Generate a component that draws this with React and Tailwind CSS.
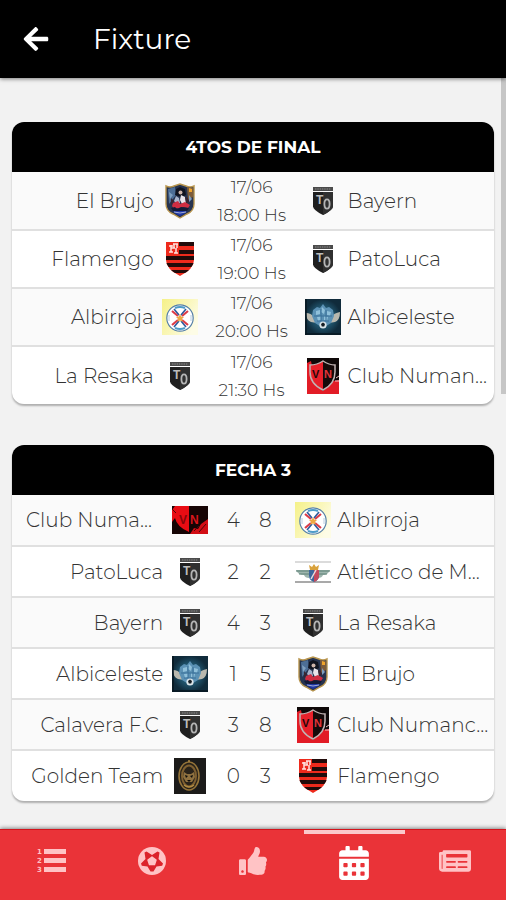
import { FaArrowLeft, FaCalendarAlt, FaNewspaper, FaThumbsUp } from "react-icons/fa";

function ShieldTO() {
  return (
    <svg viewBox="0 0 20 28" className="mx-auto h-7 w-5" role="img" aria-label="TO">
      <path d="M0 0h20v4H0z" fill="#4b4b4b" />
      <path d="M2 2h16" stroke="#8a8a8a" strokeWidth="1" strokeDasharray="1.5 .8" />
      <path d="M0 5h20v14.500q0 3.500-10 8.500Q0 23 0 19.500z" fill="#1f1f1f" />
      <path d="M10 5h10v14.500q0 3.500-10 8.500z" fill="#303030" />
      <text x="3" y="17" fontSize="12" fontWeight="700" fill="#bdbdbd" fontFamily="Liberation Sans, sans-serif">T</text>
      <ellipse cx="14" cy="17" rx="2.600" ry="4.600" fill="none" stroke="#b5b5b5" strokeWidth="1.800" />
    </svg>
  );
}

function Brujo() {
  return (
    <svg viewBox="0 0 30 36" className="mx-auto h-9 w-[30px]">
      <path d="M1 3q4 2 8 0l6-2 6 2q4 2 8 0v18q0 7-7 10l-7 4-7-4q-7-3-7-10z" fill="#26334f" stroke="#b8954e" strokeWidth="1.400" />
      <path d="M3 6l7-2 1 8-7 9z" fill="#4d6e96" />
      <path d="M22 4l6 1v9l-5 3z" fill="#7d5c3a" />
      <path d="M24 5l3 1v3h-3z" fill="#f0a52c" />
      <path d="M11 6l4-2 5 2 1 6-4 2-7-2z" fill="#10131f" />
      <circle cx="15.500" cy="9.500" r="2" fill="#cdb4aa" />
      <path d="M11 13l3 2 1 5-3 1-3-3z" fill="#a9b4cc" />
      <path d="M16 12l4 2 1 6-4 1-2-4z" fill="#e9e4ea" />
      <path d="M8 20l5-2 2 3 5-2 5 3-2 3-5-1-3 2-3-1-3 1-2-3z" fill="#cf2d42" />
      <path d="M20 14l3 1 1 4-3 1zM6 15l3 3-3 4z" fill="#3a2531" />
      <path d="M6 25l4-1 2 2 4-2 8 1-2 3H8z" fill="#131a36" />
      <path d="M8 28h14l-3 3-4 2-4-2z" fill="#1f36a3" />
      <path d="M9 29q6 2 12 0" stroke="#c3cbe6" strokeWidth=".8" fill="none" />
      <path d="M4 9l4 3-3 4zM24 12l3 4-3 3z" fill="#7f9fc0" />
    </svg>
  );
}

function Flamengo() {
  return (
    <svg viewBox="0 0 28 34" className="mx-auto h-[34px] w-7">
      <defs>
        <clipPath id="fla">
          <path d="M0 0h28v18q0 9-14 16Q0 27 0 18z" />
        </clipPath>
      </defs>
      <g clipPath="url(#fla)">
        <path d="M0 0h28v34H0z" fill="#ee2a1c" />
        <path d="M13 0h15v4H13zM13 8h15v4H13zM0 14h28v4H0zM0 21h28v4H0zM0 28h28v3H0z" fill="#210b0a" />
        <path d="M0 0h13v13H0z" fill="#ee2a1c" />
        <path d="M3 4h4M5 3v7M3 10h4M5 6h4M7 2h5M8 2v4M10 6v5M8 11h4M11 2v4" stroke="#ffe3df" strokeWidth="1.500" fill="none" />
      </g>
    </svg>
  );
}

function Albirroja() {
  return (
    <svg viewBox="0 0 36 36" className="mx-auto size-9">
      <defs>
        <linearGradient id="sun" x1="0" y1="0" x2="1" y2=".6">
          <stop offset="0" stopColor="#f5f188" />
          <stop offset=".6" stopColor="#faf7bd" />
          <stop offset="1" stopColor="#fdfce6" />
        </linearGradient>
      </defs>
      <path d="M0 0h36v36H0z" fill="url(#sun)" />
      <circle cx="18" cy="19" r="13.200" fill="#fff" stroke="#5681a8" strokeWidth="1.200" />
      <path d="M10 12l6 5M26 12l-6 5M10 26l6-5M26 26l-6-5" stroke="#dd3d48" strokeWidth="2.200" />
      <path d="M12 10l5 6M24 10l-5 6M12 28l5-6M24 28l-5-6" stroke="#2e5b9d" strokeWidth="1.600" />
      <path d="M13 9q5-2 10 0M13 29q5 2 10 0" stroke="#4d9bc8" strokeWidth="2" fill="none" />
      <path d="M7 16v6M29 16v6" stroke="#b9cfe0" strokeWidth="1" />
      <path d="M18 15l1.200 2.600 2.800.4-2 2 .5 2.800-2.500-1.300-2.500 1.300.5-2.800-2-2 2.800-.4z" fill="#eda944" />
    </svg>
  );
}

function Albiceleste() {
  return (
    <svg viewBox="0 0 36 36" className="mx-auto size-9">
      <defs>
        <radialGradient id="sky">
          <stop offset="0" stopColor="#2d6f8c" />
          <stop offset=".6" stopColor="#1e5068" />
          <stop offset="1" stopColor="#102b3b" />
        </radialGradient>
      </defs>
      <path d="M0 0h36v36H0z" fill="url(#sky)" />
      <path d="M1 14q5 0 8 4l3 6-6-1q-5-2-5-9zM35 13q-6 1-9 5l-2 6 6-1q5-2 5-10z" fill="#b9b8ae" />
      <path d="M8 11l4-3 3 1 3-4 3 4 3-1 4 3 1 6-3 7-8 5-8-5-3-7z" fill="#5b91b4" />
      <path d="M11 12l4-1v4l-4 1zM17 8l3 3-1 4-3-2zM22 12l4 1-1 4-3-1zM12 18l4-1v4l-3 1zM19 17l4 1-1 4-3-1z" fill="#8fc0da" />
      <path d="M9 17h18M12 22h12M16 10v12M21 11v11" stroke="#3a7199" strokeWidth="1" fill="none" />
      <circle cx="18" cy="26" r="3.600" fill="#dce6ea" />
      <path d="M16 25l2-1.500 2 1.500-.8 2.500h-2.400z" fill="#141c22" />
      <path d="M0 35h36M1 0v36" stroke="#071720" strokeWidth="1.500" />
    </svg>
  );
}

function Numancia() {
  return (
    <svg viewBox="0 0 32 36" className="mx-auto h-9 w-8">
      <path d="M0 0h32v36H0z" fill="#0e0808" />
      <path d="M0 5l4-2 4 21 8 9 10-10 6-1v14H0z" fill="#e21c26" />
      <path d="M3 7q7 0 13-4v29Q4 27 3 14z" fill="#e8202a" />
      <path d="M16 3q6 4 12 4v8q-1 12-12 17z" fill="#150a0a" />
      <path d="M3 7q7 0 13-4 6 4 12 4v7q0 12-12 18Q3 26 3 14z" fill="none" stroke="#c1b4b4" strokeWidth="1.500" />
      <path d="M29 20l3-2M28 23l4 0" stroke="#f0c5c5" strokeWidth="1" />
      <text x="5" y="20" fontSize="11" fontWeight="700" fill="#250707" fontFamily="Liberation Sans, sans-serif">V</text>
      <text x="17" y="20" fontSize="11" fontWeight="700" fill="#e33338" fontFamily="Liberation Sans, sans-serif">N</text>
    </svg>
  );
}

function NumanciaFlag() {
  return (
    <svg viewBox="0 0 36 28" className="mx-auto h-7 w-9">
      <path d="M0 0h36v28H0z" fill="#160404" />
      <path d="M3 0h14v26Q5 21 3 12L0 16V4z" fill="#e80c13" />
      <path d="M18 28l4-6 4 1 3-5 7-5v15z" fill="#d20d14" />
      <path d="M22 25l5-5M27 26l7-8M0 3l4 4" stroke="#4c0507" strokeWidth="1" />
      <text x="7" y="18" fontSize="12" fontWeight="700" fill="#860509" fontFamily="Liberation Sans, sans-serif">V</text>
      <text x="18" y="18" fontSize="12" fontWeight="700" fill="#d9151b" fontFamily="Liberation Sans, sans-serif">N</text>
    </svg>
  );
}

function Atletico() {
  return (
    <svg viewBox="0 0 36 22" className="mx-auto h-[22px] w-9">
      <path d="M0 1h36" stroke="#cfcfcf" strokeWidth="1.400" />
      <path d="M0 21h36" stroke="#8c8c8c" strokeWidth="1.400" />
      <path d="M1 9h13v8q-4 0-5-3-6 0-8-5zM35 9H23v8q4 0 5-3 5 0 7-5z" fill="#9db5ad" />
      <path d="M1 10h13M4 13h10M35 10H23M32 13h-9" stroke="#5c8077" strokeWidth="1" />
      <path d="M14 9h10v6q0 4-5 6-5-2-5-6z" fill="#3d679b" />
      <path d="M19 9h5v6q0 4-5 6z" fill="#c34a5d" />
      <path d="M16 18l5-9" stroke="#e7dede" strokeWidth="1.500" />
      <path d="M14 4l3 2 2-3 2 3 3-2-1 5h-8z" fill="#d9a23c" />
    </svg>
  );
}

function GoldenTeam() {
  return (
    <svg viewBox="0 0 32 36" className="mx-auto h-9 w-8">
      <path d="M0 0h32v36H0z" fill="#1c1b1a" />
      <ellipse cx="15" cy="18" rx="10" ry="14" fill="#2a231a" stroke="#957439" strokeWidth="1.600" />
      <ellipse cx="15" cy="18" rx="7" ry="10.500" fill="none" stroke="#7f6031" strokeWidth="2" />
      <path d="M10 14l3 2h4l3-2 1 5-3 5h-6l-3-5z" fill="#8f7140" />
      <path d="M11 17l3 1-2 2zM19 17l-3 1 2 2zM13 22h4l-2 2z" fill="#0d0c0b" />
      <path d="M10 27q5 4 10 0M14 3h2" stroke="#b18b42" strokeWidth="1.500" fill="none" />
    </svg>
  );
}

function Ball({ className }) {
  return (
    <svg viewBox="0 0 28 28" className={className}>
      <circle cx="14" cy="14" r="14" fill="currentColor" />
      <path
        d="M14 8l5.500-3.500 2 1-1 6.500 4.500 4.500-.8 2.200-5.700.8-3 5h-3l-3-5-5.700-.8-.8-2.200L7.500 12l-1-6.500 2-1z"
        fill="#dc232b"
      />
      <path d="M14 10l4 3-1.500 4.500h-5L10 13z" fill="currentColor" stroke="currentColor" strokeWidth="1.500" strokeLinejoin="round" />
    </svg>
  );
}

function NumberedList({ className }) {
  return (
    <svg viewBox="0 0 30 28" className={className} fill="currentColor">
      <path d="M8 2h22v5H8zM8 11h22v5H8zM8 20h22v5H8z" />
      <g fontSize="7" fontWeight="700" fontFamily="DejaVu Sans, sans-serif">
        <text x="1" y="7">1</text>
        <text x="1" y="16">2</text>
        <text x="1" y="25">3</text>
      </g>
    </svg>
  );
}

const upcoming = [
  { home: "El Brujo", homeCrest: Brujo, date: "17/06", time: "18:00 Hs", awayCrest: ShieldTO, away: "Bayern" },
  { home: "Flamengo", homeCrest: Flamengo, date: "17/06", time: "19:00 Hs", awayCrest: ShieldTO, away: "PatoLuca" },
  { home: "Albirroja", homeCrest: Albirroja, date: "17/06", time: "20:00 Hs", awayCrest: Albiceleste, away: "Albiceleste" },
  { home: "La Resaka", homeCrest: ShieldTO, date: "17/06", time: "21:30 Hs", awayCrest: Numancia, away: "Club Numan..." },
];

const results = [
  { home: "Club Numa...", homeCrest: NumanciaFlag, score: [4, 8], awayCrest: Albirroja, away: "Albirroja", cut: true },
  { home: "PatoLuca", homeCrest: ShieldTO, score: [2, 2], awayCrest: Atletico, away: "Atlético de M..." },
  { home: "Bayern", homeCrest: ShieldTO, score: [4, 3], awayCrest: ShieldTO, away: "La Resaka" },
  { home: "Albiceleste", homeCrest: Albiceleste, score: [1, 5], awayCrest: Brujo, away: "El Brujo" },
  { home: "Calavera F.C.", homeCrest: ShieldTO, score: [3, 8], awayCrest: Numancia, away: "Club Numanc..." },
  { home: "Golden Team", homeCrest: GoldenTeam, score: [0, 3], awayCrest: Flamengo, away: "Flamengo" },
];

const tabs = [
  { label: "Posiciones", icon: NumberedList, size: "h-7 w-[30px]" },
  { label: "Goleadores", icon: Ball, size: "size-7" },
  { label: "Fair play", icon: FaThumbsUp, size: "size-7" },
  { label: "Fixture", icon: FaCalendarAlt, size: "size-[34px]", active: true },
  { label: "Noticias", icon: FaNewspaper, size: "size-8" },
];

function Card({ title, children }) {
  return (
    <section className="overflow-hidden rounded-xl bg-white shadow-[0_2px_2px_rgba(0,0,0,0.28)]">
      <table className="w-full table-fixed border-collapse">
        <caption className="bg-black text-[17px] leading-[50px] font-bold text-white">{title}</caption>
        {children}
      </table>
    </section>
  );
}

export default function App() {
  return (
    <div className="flex min-h-screen flex-col bg-[#f2f2f2] font-['Montserrat','Inter',sans-serif] text-[#333]">
      <header className="z-10 flex h-[78px] items-center bg-black pl-[22px] text-white shadow-[0_1px_4px_rgba(0,0,0,0.5)]">
        <button type="button" aria-label="Volver" className="w-[71px]">
          <FaArrowLeft className="size-7" />
        </button>
        <h1 className="text-[28px] leading-9">Fixture</h1>
      </header>

      <main className="relative flex flex-1 flex-col gap-[41px] px-3 pt-11 pb-7">
        <div className="absolute top-0 right-0 h-[316px] w-[5px] bg-[#c6c6c6]" />

        <Card title="4TOS DE FINAL">
          <colgroup>
            <col className="w-[30%]" />
            <col className="w-[46px]" />
            <col className="w-[98px]" />
            <col className="w-11" />
            <col />
          </colgroup>
          <tbody>
            {upcoming.map((match) => (
              <tr key={match.home} className="h-[58px] border-t-2 border-[#e0e0e0] first:border-t-0 odd:bg-[#fafafa]">
                <td className="truncate pr-[3px] text-right text-xl font-light">{match.home}</td>
                <td><match.homeCrest /></td>
                <td className="text-center text-[17px] leading-7 font-light">
                  {match.date}
                  <br />
                  {match.time}
                </td>
                <td><match.awayCrest /></td>
                <td className="truncate pl-[3px] text-xl font-light">{match.away}</td>
              </tr>
            ))}
          </tbody>
        </Card>

        <Card title="FECHA 3">
          <colgroup>
            <col className="w-[32%]" />
            <col className="w-[47px]" />
            <col className="w-[76px]" />
            <col className="w-12" />
            <col />
          </colgroup>
          <tbody>
            {results.map((match) => (
              <tr key={match.home} className="h-[51px] border-t-2 border-[#e0e0e0] first:border-t-0 odd:bg-[#fafafa]">
                <td className={match.cut ? "truncate pl-3.5 text-xl font-light" : "truncate pr-[3px] text-right text-xl font-light"}>
                  {match.home}
                </td>
                <td><match.homeCrest /></td>
                <td className="pr-1 text-xl font-light">
                  <div className="flex justify-center">
                    <span className="w-8 text-center">{match.score[0]}</span>
                    <span className="w-8 text-center">{match.score[1]}</span>
                  </div>
                </td>
                <td><match.awayCrest /></td>
                <td className="truncate text-xl font-light">{match.away}</td>
              </tr>
            ))}
          </tbody>
        </Card>
      </main>

      <nav className="flex h-[71px] border-t border-[#d3141c] bg-[#ea3338] shadow-[0_-1px_4px_rgba(0,0,0,0.45)]">
        {tabs.map((tab) => (
          <button
            key={tab.label}
            type="button"
            aria-label={tab.label}
            className={
              tab.active
                ? "flex flex-1 items-center justify-center border-t-4 border-[#fbc9cb] pb-2 text-white"
                : "flex flex-1 items-center justify-center pb-2 text-[#ffc3c5]"
            }
          >
            <tab.icon className={tab.size} />
          </button>
        ))}
      </nav>
    </div>
  );
}
